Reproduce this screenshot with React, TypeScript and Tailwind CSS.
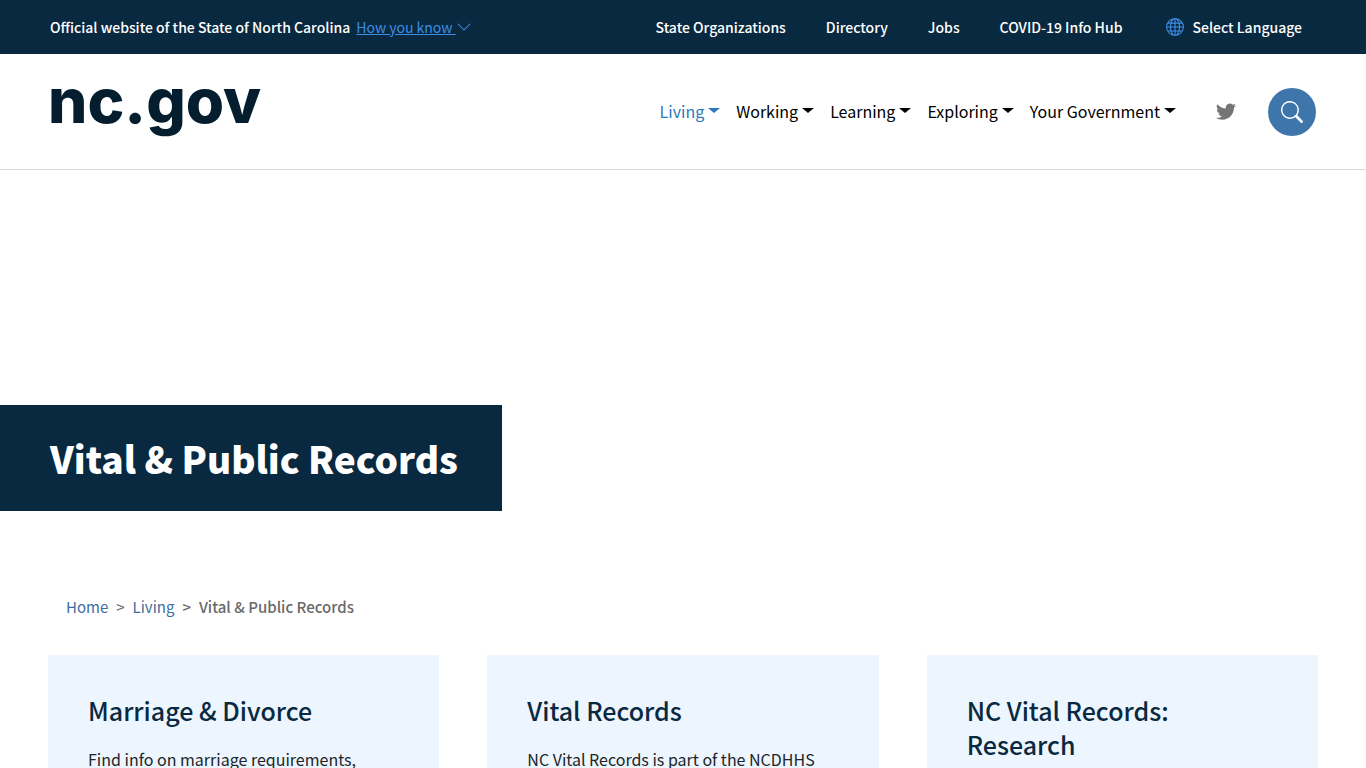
import { BsChevronDown, BsGlobe, BsSearch, BsTwitter } from "react-icons/bs";

const utilityLinks = [
  "State Organizations",
  "Directory",
  "Jobs",
  "COVID-19 Info Hub",
];

const navItems = [
  { label: "Living", active: true },
  { label: "Working", active: false },
  { label: "Learning", active: false },
  { label: "Exploring", active: false },
  { label: "Your Government", active: false },
];

type Card = {
  title: string;
  text?: string;
};

const cards: Card[] = [
  { title: "Marriage & Divorce", text: "Find info on marriage requirements," },
  { title: "Vital Records", text: "NC Vital Records is part of the NCDHHS" },
  { title: "NC Vital Records: Research" },
];

function UtilityBar() {
  return (
    <div className="flex h-[54px] items-center justify-between bg-[#092940] pr-16 pl-[50px] text-sm font-medium text-white">
      <p>
        Official website of the State of North Carolina
        <button
          type="button"
          className="ml-1.5 inline-flex cursor-pointer items-center font-normal text-[#3e8ee6]"
        >
          <span className="whitespace-pre underline">How you know </span>
          <BsChevronDown className="size-4" />
        </button>
      </p>
      <nav className="flex items-center gap-10">
        {utilityLinks.map((label) => (
          <a key={label} href="#">
            {label}
          </a>
        ))}
        <a href="#" className="ml-1 flex items-center gap-2">
          <BsGlobe className="size-[18px] text-[#3e8ee6]" />
          Select Language
        </a>
      </nav>
    </div>
  );
}

function Header() {
  return (
    <header className="flex h-[116px] items-center justify-between border-b border-[#d9dbdd] pr-[50px] pl-12">
      <a
        href="#"
        className="pb-[22px] font-['Inter',sans-serif] text-[62px] leading-[80px] font-extrabold text-[#041e2f]"
      >
        nc.gov
      </a>
      <div className="flex items-center">
        <nav className="flex items-center gap-4 pb-0.5">
          {navItems.map((item) => (
            <button
              key={item.label}
              type="button"
              className={
                item.active
                  ? "flex cursor-pointer items-center gap-1 text-base text-[#3077bb]"
                  : "flex cursor-pointer items-center gap-1 text-base text-black"
              }
            >
              {item.label}
              <span className="border-x-[6px] border-t-[5px] border-x-transparent border-t-current" />
            </button>
          ))}
        </nav>
        <a href="#" aria-label="Twitter" className="ml-10 pb-0.5 text-[#757575]">
          <BsTwitter className="size-5" />
        </a>
        <button
          type="button"
          aria-label="Search"
          className="ml-8 flex size-12 cursor-pointer items-center justify-center rounded-full bg-[#3e75ab] text-white"
        >
          <BsSearch className="size-[22px]" />
        </button>
      </div>
    </header>
  );
}

function Breadcrumb() {
  return (
    <nav
      aria-label="Breadcrumb"
      className="flex gap-2 px-[66px] pt-[84px] text-[15px] leading-6 text-[#696969]"
    >
      <a href="#" className="text-[#3e6d9c]">
        Home
      </a>
      <span>&gt;</span>
      <a href="#" className="text-[#3e6d9c]">
        Living
      </a>
      <span className="font-medium">&gt;</span>
      <span className="font-medium">Vital &amp; Public Records</span>
    </nav>
  );
}

export default function App() {
  return (
    <div className="min-h-screen bg-white font-['Noto_Sans_CJK_SC',sans-serif]">
      <UtilityBar />
      <Header />
      <main>
        <div className="flex pt-[235px]">
          <h1 className="bg-[#092940] py-7 pr-11 pl-[50px] text-[37px] leading-[50px] font-black text-white">
            Vital &amp; Public Records
          </h1>
        </div>
        <Breadcrumb />
        <section className="grid grid-cols-3 gap-12 px-12 pt-9">
          {cards.map((card) => (
            <article key={card.title} className="bg-[#edf5fe] px-10 pt-[38px] pb-10">
              <h2 className="text-[25px] leading-[34px] font-medium text-[#092940]">
                {card.title}
              </h2>
              {card.text ? (
                <p className="mt-5 text-base leading-6 text-[#212529]">
                  {card.text}
                </p>
              ) : null}
            </article>
          ))}
        </section>
      </main>
    </div>
  );
}
